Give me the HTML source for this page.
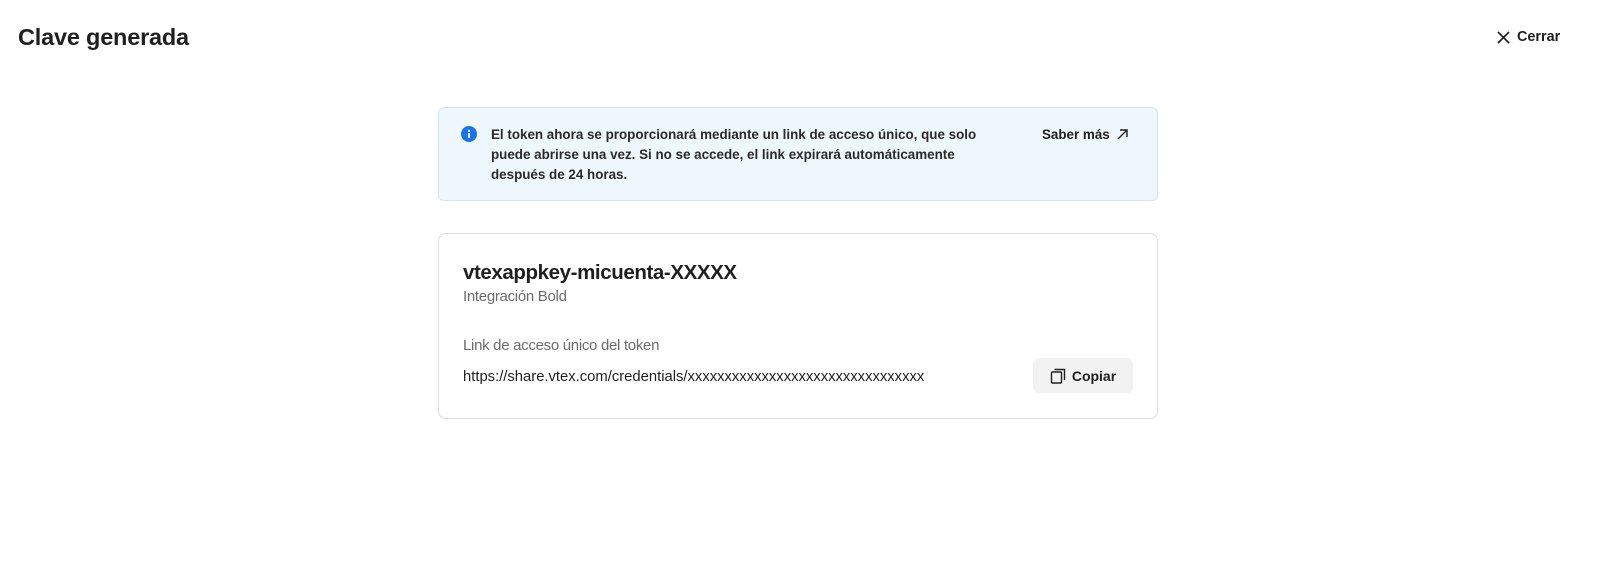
<!DOCTYPE html>
<html><head><meta charset="utf-8"><style>
*{margin:0;padding:0;box-sizing:border-box}
body{width:1610px;height:572px;background:#fff;font-family:"Liberation Sans",sans-serif;color:#1f1f1f;position:relative;overflow:hidden}
.abs{position:absolute;white-space:nowrap}
</style></head><body>
<div class="abs" style="left:18px;top:24px;font-size:23.5px;font-weight:bold;letter-spacing:-0.2px">Clave generada</div>
<div class="abs" style="left:1496px;top:29px;font-size:14.4px;font-weight:bold;display:flex;align-items:center;gap:6px">
<svg width="15" height="15" viewBox="0 0 15 15"><path d="M2 2L13 13M13 2L2 13" stroke="#1f1f1f" stroke-width="1.6"/></svg>Cerrar</div>

<div class="abs" style="left:438px;top:107px;width:720px;height:94px;background:#eef7fc;border:1px solid #cfe6f2;border-radius:6px"></div>
<svg class="abs" style="left:461px;top:126px" width="16" height="16" viewBox="0 0 16 16"><circle cx="8" cy="8" r="8" fill="#1a73e8"/><rect x="7.1" y="7" width="1.8" height="5" fill="#fff"/><circle cx="8" cy="4.8" r="1.1" fill="#fff"/></svg>
<div class="abs" style="left:491px;top:125px;font-size:13.4px;line-height:20px;font-weight:bold;color:#2a2a2a">El token ahora se proporcionará mediante un link de acceso único, que solo<br>puede abrirse una vez. Si no se accede, el link expirará automáticamente<br>después de 24 horas.</div>
<div class="abs" style="left:1042px;top:127px;font-size:13.4px;font-weight:bold;display:flex;align-items:center;gap:6px">Saber más <svg width="13" height="13" viewBox="0 0 13 13"><path d="M2 11L11 2M4 2H11V9" stroke="#1f1f1f" stroke-width="1.4" fill="none"/></svg></div>

<div class="abs" style="left:438px;top:233px;width:720px;height:186px;border:1px solid #dcdcdc;border-radius:8px"></div>
<div class="abs" style="left:463px;top:261px;font-size:20.5px;font-weight:bold;letter-spacing:-0.4px">vtexappkey-micuenta-XXXXX</div>
<div class="abs" style="left:463px;top:288px;font-size:15px;color:#6b6b6b;letter-spacing:-0.3px">Integración Bold</div>
<div class="abs" style="left:463px;top:337px;font-size:15px;color:#6b6b6b;letter-spacing:-0.3px">Link de acceso único del token</div>
<div class="abs" style="left:463px;top:369px;font-size:14.8px;color:#1f1f1f">https://share.vtex.com/credentials/xxxxxxxxxxxxxxxxxxxxxxxxxxxxxxxx</div>
<div class="abs" style="left:1033px;top:358px;width:100px;height:35px;background:#f2f2f2;border-radius:6px;display:flex;align-items:center;justify-content:center;gap:6px;font-size:14px;font-weight:bold">
<svg width="16" height="16" viewBox="0 0 16 16"><rect x="1.5" y="4" width="10" height="11" rx="1" fill="none" stroke="#1f1f1f" stroke-width="1.4"/><path d="M4.5 1.5H14.5V12" fill="none" stroke="#1f1f1f" stroke-width="1.4"/></svg>Copiar</div>
</body></html>
